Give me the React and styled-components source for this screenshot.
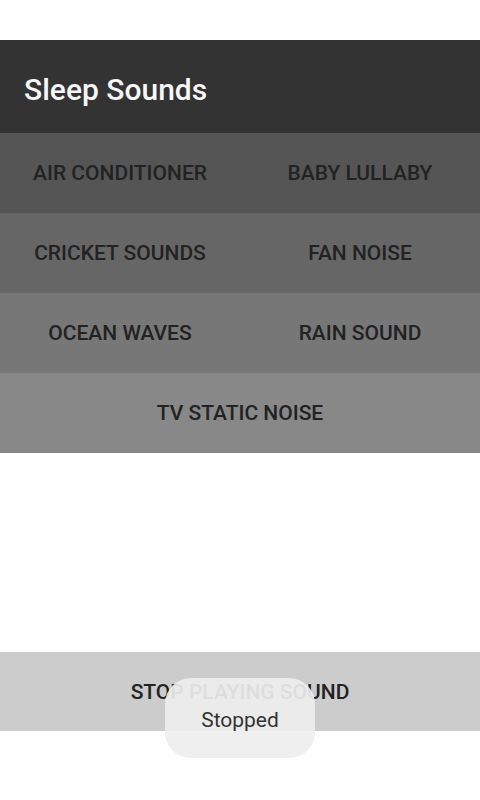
import React from "react";
import styled, { createGlobalStyle } from "styled-components";

const GlobalStyle = createGlobalStyle`
	body {
		margin: 0;
		background: #ffffff;
		font-family: Roboto, "Liberation Sans", sans-serif;
	}
`;

const Screen = styled.div`
	position: relative;
	display: flex;
	flex-direction: column;
	height: 800px;
	padding-top: 40px;
	padding-bottom: 69px;
	box-sizing: border-box;
	background: #ffffff;
`;

const Toolbar = styled.header`
	display: flex;
	align-items: center;
	height: 93px;
	padding-left: 24px;
	padding-top: 5px;
	box-sizing: border-box;
	background-color: #333333;
	color: #f7f7f7;
	font-size: 30px;
	font-weight: 500;
`;

const SoundGrid = styled.div`
	display: grid;
	grid-template-columns: 1fr 1fr;
	grid-auto-rows: 80px;
`;

const SoundButton = styled.button`
	display: flex;
	align-items: center;
	justify-content: center;
	grid-column: ${({ wide }) => (wide ? "1 / span 2" : "auto")};
	border: none;
	padding: 0;
	background-color: ${({ shade }) => shade};
	color: #222222;
	font-family: Roboto, "Liberation Sans", sans-serif;
	font-size: 21px;
	font-weight: 500;
	cursor: pointer;
`;

const Spacer = styled.div`
	flex: 1;
`;

const StopButton = styled.button`
	height: 79px;
	border: none;
	background-color: #cccccc;
	color: #222222;
	font-family: Roboto, "Liberation Sans", sans-serif;
	font-size: 21px;
	font-weight: 500;
	cursor: pointer;
`;

const Toast = styled.div`
	position: absolute;
	left: 165px;
	top: 678px;
	width: 150px;
	height: 80px;
	padding-top: 3px;
	box-sizing: border-box;
	display: flex;
	align-items: center;
	justify-content: center;
	border-radius: 26px;
	background-color: rgba(238, 238, 238, 0.92);
	color: #333333;
	font-size: 21px;
`;

const sounds = [
	{ name: "AIR CONDITIONER", shade: "#555555" },
	{ name: "BABY LULLABY", shade: "#555555" },
	{ name: "CRICKET SOUNDS", shade: "#666666" },
	{ name: "FAN NOISE", shade: "#666666" },
	{ name: "OCEAN WAVES", shade: "#777777" },
	{ name: "RAIN SOUND", shade: "#777777" },
	{ name: "TV STATIC NOISE", shade: "#888888", wide: true },
];

const App = () => {
	return (
		<Screen>
			<GlobalStyle />
			<Toolbar>Sleep Sounds</Toolbar>
			<SoundGrid>
				{sounds.map(s => (
					<SoundButton key={s.name} shade={s.shade} wide={s.wide}>
						{s.name}
					</SoundButton>
				))}
			</SoundGrid>
			<Spacer />
			<StopButton>STOP PLAYING SOUND</StopButton>
			<Toast>Stopped</Toast>
		</Screen>
	);
};

export default App;
